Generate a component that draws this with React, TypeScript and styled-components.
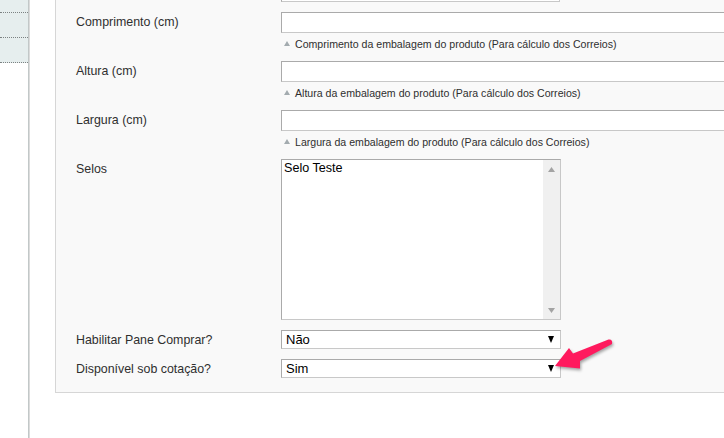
import * as React from "react";
import styled, {createGlobalStyle} from "styled-components";

const GlobalStyle = createGlobalStyle`
  html, body {
    margin: 0;
    padding: 0;
    background: #fff;
    overflow: hidden;
  }
  body {
    font-family: "Liberation Sans", Arial, sans-serif;
    color: #2f2f2f;
  }
`

const Page = styled.div`
  position: relative;
  display: flex;
  height: 438px;
  width: 724px;
  overflow: hidden;
`

const Sidebar = styled.div`
  width: 28px;
  flex: none;
  border-right: 1px solid #c2c8c8;
  box-shadow: 1px 0 0 #dcdcdc;
`

const SideItem = styled.div<{ $offset?: number }>`
  height: 24px;
  margin-top: ${p => p.$offset ?? 0}px;
  background: #e6eeee;
  border-bottom: 1px dotted #7c8282;
  font-size: 12px;
  line-height: 14px;
  color: #2f2f2f;
  white-space: nowrap;
  overflow: hidden;
  text-indent: -2px;
`

const Main = styled.div`
  flex: 1;
  min-width: 0;
  padding-left: 26px;
`

const Fieldset = styled.div`
  margin-top: -30px;
  width: 900px;
  background: #f9f9f9;
  border: 1px solid #d6d6d6;
  padding: 10px 0 14px 20px;
`

const Row = styled.div`
  display: grid;
  grid-template-columns: 205px 1fr;
  margin-bottom: 10px;
  &:last-child {
    margin-bottom: 0;
  }
`

const Label = styled.div`
  font-size: 12.4px;
  line-height: 18px;
  padding-top: 1px;
  color: #2f2f2f;
`

const Value = styled.div`
  display: flex;
  flex-direction: column;
`

const TextInput = styled.div<{ $width: number }>`
  box-sizing: border-box;
  height: 21px;
  width: ${p => p.$width}px;
  background: #fff;
  border: 1px solid;
  border-color: #aaa #c8c8c8 #c8c8c8 #aaa;
`

const Note = styled.div`
  display: flex;
  align-items: center;
  margin-top: 3px;
  padding-left: 3px;
  height: 15px;
  font-size: 10.6px;
  color: #2f2f2f;
  white-space: nowrap;
  svg {
    margin-right: 5px;
  }
`

const ListBox = styled.div`
  box-sizing: border-box;
  width: 280px;
  height: 161px;
  display: flex;
  background: #fff;
  border: 1px solid;
  border-color: #aaa #c8c8c8 #c8c8c8 #aaa;
`

const Options = styled.div`
  flex: 1;
  padding: 1px 2px;
  font-size: 12.6px;
  line-height: 15px;
  color: #000;
`

const Scrollbar = styled.div`
  width: 17px;
  background: #f0f0f0;
  display: flex;
  flex-direction: column;
  justify-content: space-between;
  align-items: center;
  padding: 7px 0 6px;
`

const SelectBox = styled.div`
  box-sizing: border-box;
  width: 280px;
  height: 19px;
  display: flex;
  align-items: center;
  justify-content: space-between;
  padding: 0 6px 0 4px;
  background: #fff;
  border: 1px solid;
  border-color: #aaa #c8c8c8 #c8c8c8 #aaa;
  font-size: 13px;
  color: #000;
`

const Pointer = styled.svg`
  position: absolute;
  left: 0;
  top: 0;
  pointer-events: none;
  filter: drop-shadow(1px 2px 1.5px rgba(0, 0, 0, 0.35));
`

const Tri = ({up, color, w = 7, h = 5}: { up?: boolean; color: string; w?: number; h?: number }) => (
  <svg width={w} height={h} viewBox={`0 0 ${w} ${h}`}>
    <polygon points={up ? `0,${h} ${w / 2},0 ${w},${h}` : `0,0 ${w},0 ${w / 2},${h}`} fill={color}/>
  </svg>
)

const measures = [
  {label: "Comprimento (cm)", note: "Comprimento da embalagem do produto (Para cálculo dos Correios)"},
  {label: "Altura (cm)", note: "Altura da embalagem do produto (Para cálculo dos Correios)"},
  {label: "Largura (cm)", note: "Largura da embalagem do produto (Para cálculo dos Correios)"},
]

const selects = [
  {label: "Habilitar Pane Comprar?", value: "Não"},
  {label: "Disponível sob cotação?", value: "Sim"},
]

export default function App() {
  return (
    <>
      <GlobalStyle/>
      <Page>
        <Sidebar>
          <SideItem $offset={-12}>tes</SideItem>
          <SideItem>&nbsp;</SideItem>
          <SideItem>&nbsp;</SideItem>
        </Sidebar>
        <Main>
          <Fieldset>
            <Row>
              <Label/>
              <Value><TextInput $width={279}/></Value>
            </Row>
            {measures.map(m => (
              <Row key={m.label}>
                <Label>{m.label}</Label>
                <Value>
                  <TextInput $width={600}/>
                  <Note><Tri up color="#a3abaf" w={6} h={5}/>{m.note}</Note>
                </Value>
              </Row>
            ))}
            <Row>
              <Label>Selos</Label>
              <Value>
                <ListBox>
                  <Options>Selo Teste</Options>
                  <Scrollbar>
                    <Tri up color="#a3a3a3"/>
                    <Tri color="#a3a3a3"/>
                  </Scrollbar>
                </ListBox>
              </Value>
            </Row>
            {selects.map(s => (
              <Row key={s.label}>
                <Label>{s.label}</Label>
                <Value>
                  <SelectBox>
                    <span>{s.value}</span>
                    <Tri color="#000" w={6} h={7}/>
                  </SelectBox>
                </Value>
              </Row>
            ))}
          </Fieldset>
        </Main>
        <Pointer width="724" height="438" viewBox="0 0 724 438">
          <path
            d="M555,366 L569,348 L573,353.5 L608.5,339.5 Q613,339 612,344 L580,361 L580,368.5 Z"
            fill="#ff1a5e"
            strokeLinejoin="round"
          />
        </Pointer>
      </Page>
    </>
  );
}
